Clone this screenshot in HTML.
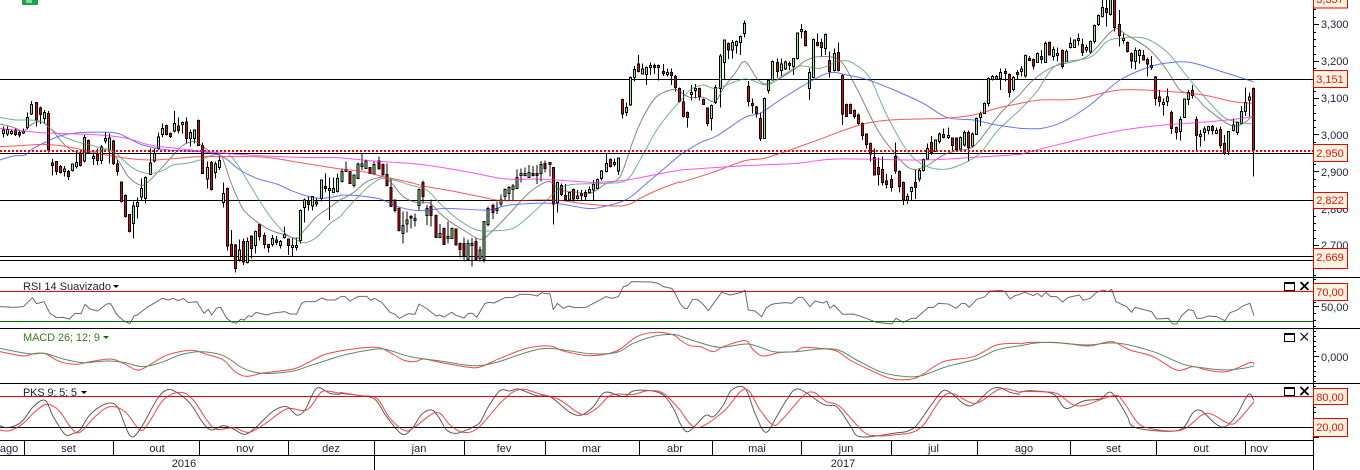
<!DOCTYPE html>
<html lang="pt"><head><meta charset="utf-8"><title>Chart</title>
<style>
html,body{margin:0;padding:0;background:#fff;width:1360px;height:470px;overflow:hidden}
svg{display:block}
text{font-family:"Liberation Sans",Arial,sans-serif;font-size:11px;fill:#1a2238}
.b{fill:#f7f4df;stroke:#f00000;stroke-width:1}
.r{fill:#f01010;text-anchor:middle;font-size:11px}
.m{text-anchor:middle}
.w{fill:none;stroke:#000;stroke-width:3}
.g{fill:#96ee96;stroke:#000;stroke-width:3}
.d{fill:#f00000;stroke:#000;stroke-width:3}
.ma polyline,.ma path{fill:none;stroke-width:3;stroke-linejoin:round;stroke-linecap:round}
.i polyline,.i path{fill:none;stroke-width:3;stroke-linejoin:round}
</style></head><body>
<svg width="1360" height="470" viewBox="0 0 1360 470" xmlns="http://www.w3.org/2000/svg">
<rect x="22" y="0" width="16" height="5" fill="#1fa04a"/>
<rect x="26" y="0" width="6" height="3" fill="#8ad49c"/>
<g shape-rendering="crispEdges" stroke="#000" stroke-width="1">
<path d="M0 79.5H1313M0 153.5H1313M0 200.5H1313M0 256.5H1313M0 260.5H1313M0 277.5H1360M0 328.5H1360M0 383.5H1360M0 440.5H1313M0 455.5H1313M0 427.5H1313M1313.5 0V470M24.5 440V455M113.5 440V455M199.5 440V455M288.5 440V455M374.5 440V470M464.5 440V455M545.5 440V455M639.5 440V455M712.5 440V455M801.5 440V455M891.5 440V455M977.5 440V455M1070.5 440V455M1156.5 440V455M1245.5 440V455"/>
<path stroke="#f00000" d="M0 291.5H1313M0 396.5H1313"/>
<path stroke="#007000" d="M0 321.5H1313"/>
<path d="M1313 24.5h6M1313 61.5h6M1313 98.5h6M1313 134.5h6M1313 171.5h6M1313 208.5h6M1313 245.5h6M1313 9.5h3M1313 17.5h3M1313 32.5h3M1313 39.5h3M1313 46.5h3M1313 54.5h3M1313 68.5h3M1313 76.5h3M1313 83.5h3M1313 91.5h3M1313 105.5h3M1313 113.5h3M1313 120.5h3M1313 127.5h3M1313 142.5h3M1313 149.5h3M1313 157.5h3M1313 164.5h3M1313 179.5h3M1313 186.5h3M1313 193.5h3M1313 201.5h3M1313 216.5h3M1313 223.5h3M1313 230.5h3M1313 238.5h3M1313 252.5h3M1313 260.5h3M1313 267.5h3M1313 275.5h3"/>
<path d="M1313 279.5h3M1313 284.5h3M1313 306.5h6M1313 302.5h3M1313 313.5h3M1313 320.5h3M1313 326.5h3M1313 331.5h3M1313 336.5h3M1313 341.5h3M1313 346.5h3M1313 351.5h3M1313 356.5h6M1313 361.5h3M1313 366.5h3M1313 371.5h3M1313 376.5h3M1313 381.5h3M1313 386.5h3M1313 407.5h3M1313 412.5h3M1313 437.5h6"/>
</g>
<!-- candles section 1 -->
<g transform="translate(.1667 0) scale(.33333)" shape-rendering="crispEdges">
<path class="w" d="M10 380V412M22 380V408M34 388V405M46 385V408M58 390V412M70 385V402M82 337V388M94 303V345M109 307V380M121 320V372M133 330V370M145 333V458M157 477V527M169 484V525M181 495V520M193 498V530M205 510V540M217 490V515M229 455V505M241 450V500M253 405V488M265 418V462M280 462V495M292 445V495M304 435V492M316 398V430M328 400V490M340 420V495M352 480V527M364 544V607M376 583V652M388 642V697M400 605V716M412 592V655M424 535V600M436 530V610M451 445V525M463 445V487M475 397V450M487 370V412M499 374V406M511 398V414M523 333V397M535 352V400M547 365V400M559 352V430M571 388V440M583 388V430M595 359V438M607 428V522M622 485V565M634 483V571M646 485V535M658 470V510M670 548V622M682 563V752M694 690V770M706 732V818M718 718V785M730 715V795M742 712V790M754 706V775M766 692V760M778 670V722M793 698V745M805 732V757M817 705V740M829 708V735M841 720V745M853 680V716M865 715V765M877 712V768M889 712V752M901 629V730M913 595V668M925 590V632M937 588V632M949 596V620M964 538V605M976 520V578M988 532V660M1000 532V578M1012 520V578"/>
<path class="g" d="M7 390h6V400h-6zM19 388h6V402h-6zM31 394h6V401h-6zM67 393h6V399h-6zM79 352h6V382h-6zM91 313h6V342h-6zM130 337h6V356h-6zM190 507h6V515h-6zM214 492h6V512h-6zM226 487h6V499h-6zM250 412h6V483h-6zM277 469h6V475h-6zM301 441h6V481h-6zM313 415h6V423h-6zM325 414h6V450h-6zM397 618h6V670h-6zM409 607h6V620h-6zM421 565h6V591h-6zM433 532h6V596h-6zM448 489h6V524h-6zM460 461h6V483h-6zM472 411h6V445h-6zM484 385h6V404h-6zM520 370h6V393h-6zM544 367h6V373h-6zM568 397h6V416h-6zM580 390h6V416h-6zM619 502h6V537h-6zM643 492h6V518h-6zM655 481h6V503h-6zM667 580h6V607h-6zM715 750h6V780h-6zM739 724h6V788h-6zM763 694h6V737h-6zM814 715h6V734h-6zM838 724h6V737h-6zM850 703h6V712h-6zM874 736h6V743h-6zM886 736h6V743h-6zM898 631h6V722h-6zM910 600h6V623h-6zM934 590h6V618h-6zM946 606h6V612h-6zM961 540h6V596h-6zM985 565h6V571h-6zM997 565h6V577h-6zM1009 535h6V575h-6z"/>
<path class="d" d="M43 390h6V403h-6zM55 397h6V405h-6zM106 307h6V360h-6zM118 324h6V344h-6zM142 340h6V450h-6zM154 489h6V497h-6zM166 484h6V514h-6zM178 499h6V517h-6zM202 514h6V529h-6zM238 460h6V497h-6zM262 421h6V459h-6zM289 462h6V482h-6zM337 423h6V491h-6zM349 492h6V515h-6zM361 546h6V604h-6zM373 586h6V650h-6zM385 644h6V695h-6zM496 376h6V404h-6zM508 400h6V410h-6zM532 378h6V392h-6zM556 366h6V416h-6zM592 361h6V436h-6zM604 436h6V520h-6zM631 487h6V569h-6zM679 565h6V738h-6zM691 733h6V768h-6zM703 735h6V805h-6zM727 724h6V786h-6zM751 708h6V745h-6zM775 674h6V710h-6zM790 706h6V734h-6zM802 734h6V743h-6zM826 720h6V728h-6zM862 717h6V737h-6zM922 602h6V613h-6zM973 559h6V566h-6z"/>
</g>
<!-- candles section 2 -->
<g transform="translate(340.1667 0) scale(.33333)" shape-rendering="crispEdges">
<path class="w" d="M5 505V547M17 485V516M29 513V552M41 523V562M53 488V537M65 462V510M77 478V507M89 501V522M101 485V524M116 470V509M128 491V527M140 490V559M152 535V621M164 598V638M176 623V694M188 635V730M200 635V698M212 645V685M224 640V680M236 566V632M248 542V610M260 615V675M272 598V680M287 644V714M299 672V712M311 683V735M323 665V730M335 683V717M347 685V737M359 728V772M371 712V785M383 718V780M395 714V800M407 712V782M419 740V785M431 663V788M443 620V680M458 610V657M470 605V642M482 583V620M494 565V600M506 558V603M518 552V600M530 508V567M542 505V548M554 502V529M566 495V534M578 498V529M590 495V552M602 483V545M614 482V517M629 486V530M640 501V673M652 545V638M664 550V588M676 552V602M688 576V602M700 565V605M712 570V598M724 570V600M736 570V600M748 560V580M760 540V600M772 535V567M784 510V542M799 462V517M811 475V502M823 475V500M835 472V525M847 296V356M859 308V348M871 230V318M883 198V245M895 165V217M907 190V224M919 200V255M931 187V225M943 190V222M955 194V242M970 192V228M982 205V230M994 205V255M1006 225V275M1018 263V307"/>
<path class="g" d="M2 514h6V545h-6zM14 508h6V514h-6zM38 525h6V557h-6zM50 492h6V535h-6zM62 492h6V500h-6zM74 483h6V505h-6zM98 493h6V522h-6zM185 676h6V700h-6zM197 660h6V672h-6zM221 656h6V661h-6zM233 568h6V617h-6zM257 625h6V647h-6zM296 700h6V712h-6zM320 709h6V716h-6zM332 685h6V715h-6zM380 730h6V778h-6zM392 730h6V736h-6zM416 750h6V775h-6zM428 665h6V778h-6zM440 626h6V674h-6zM467 625h6V632h-6zM479 600h6V612h-6zM491 568h6V589h-6zM503 562h6V580h-6zM515 558h6V568h-6zM527 532h6V565h-6zM539 520h6V527h-6zM551 520h6V527h-6zM563 517h6V532h-6zM599 493h6V520h-6zM649 547h6V607h-6zM685 578h6V600h-6zM709 588h6V596h-6zM745 568h6V578h-6zM757 553h6V570h-6zM769 538h6V565h-6zM781 513h6V536h-6zM796 490h6V515h-6zM820 487h6V494h-6zM832 474h6V513h-6zM856 322h6V338h-6zM868 232h6V315h-6zM880 208h6V233h-6zM904 207h6V222h-6zM916 202h6V224h-6zM928 196h6V203h-6zM979 217h6V224h-6z"/>
<path class="d" d="M26 515h6V550h-6zM86 503h6V520h-6zM113 483h6V507h-6zM125 493h6V525h-6zM137 524h6V557h-6zM149 562h6V619h-6zM161 600h6V632h-6zM173 625h6V692h-6zM209 650h6V654h-6zM245 547h6V590h-6zM269 619h6V647h-6zM284 646h6V712h-6zM308 685h6V733h-6zM344 687h6V735h-6zM356 730h6V748h-6zM368 730h6V768h-6zM404 724h6V780h-6zM455 617h6V637h-6zM575 520h6V527h-6zM587 520h6V527h-6zM611 490h6V505h-6zM626 488h6V493h-6zM637 503h6V612h-6zM661 556h6V583h-6zM673 586h6V600h-6zM697 568h6V597h-6zM721 580h6V586h-6zM733 578h6V590h-6zM808 478h6V500h-6zM844 298h6V342h-6zM892 192h6V215h-6zM940 196h6V203h-6zM952 196h6V203h-6zM967 214h6V220h-6zM991 217h6V227h-6zM1003 229h6V263h-6zM1015 265h6V305h-6z"/>
</g>
<!-- candles section 3 -->
<g transform="translate(680.1667 0) scale(.33333)" shape-rendering="crispEdges">
<path class="w" d="M10 270V352M22 335V383M34 255V302M46 252V295M58 262V302M70 296V315M82 322V378M94 314V392M106 255V312M121 162V323M133 118V240M145 128V177M157 120V175M169 122V160M181 107V165M193 62V113M205 243V320M217 295V340M229 318V352M241 338V423M253 293V417M265 238V280M277 182V242M292 175V232M304 175V228M316 182V210M328 185V210M340 174V225M352 97V178M364 72V115M376 90V140M388 205V300M400 116V235M412 100V139M424 115V170M436 101V165M448 155V232M463 145V214M475 127V214M487 224V375M499 311V351M511 311V342M523 328V355M535 340V373M547 368V420M559 400V445M571 428V485M583 445V527M595 472V557M607 470V557M619 522V565M634 525V575M646 428V522M658 512V578M670 545V615M682 580V612M694 560V600M706 510V597M718 505V545M730 475V515M742 430V479M754 408V465M766 418V456M778 398V430M790 385V415M805 382V417M817 412V450M829 412V450M841 410V449M853 392V440M865 392V485M877 398V442M889 352V405M901 335V378M913 308V342M925 233V320M937 225V242M949 225V239M961 205V270M976 205V245M988 221V293M1000 228V275M1012 210V238"/>
<path class="g" d="M31 277h6V284h-6zM43 265h6V272h-6zM91 316h6V355h-6zM103 263h6V307h-6zM118 168h6V265h-6zM130 120h6V187h-6zM154 127h6V150h-6zM166 124h6V136h-6zM178 109h6V128h-6zM190 70h6V100h-6zM250 295h6V415h-6zM262 242h6V272h-6zM274 184h6V240h-6zM301 192h6V212h-6zM313 186h6V207h-6zM337 176h6V200h-6zM349 99h6V176h-6zM361 88h6V95h-6zM385 217h6V266h-6zM397 118h6V233h-6zM433 103h6V145h-6zM460 160h6V212h-6zM679 590h6V600h-6zM691 562h6V574h-6zM715 511h6V537h-6zM727 478h6V512h-6zM739 445h6V477h-6zM763 420h6V454h-6zM775 402h6V425h-6zM802 406h6V412h-6zM838 412h6V447h-6zM850 398h6V435h-6zM874 402h6V438h-6zM886 355h6V403h-6zM898 342h6V352h-6zM910 310h6V340h-6zM922 235h6V311h-6zM934 229h6V238h-6zM946 229h6V237h-6zM958 217h6V236h-6zM997 232h6V268h-6z"/>
<path class="d" d="M7 306h6V350h-6zM19 337h6V353h-6zM55 265h6V290h-6zM67 298h6V313h-6zM79 324h6V371h-6zM142 130h6V150h-6zM202 259h6V305h-6zM214 310h6V317h-6zM226 321h6V341h-6zM238 355h6V415h-6zM289 187h6V214h-6zM325 190h6V197h-6zM373 95h6V137h-6zM409 127h6V137h-6zM421 127h6V143h-6zM445 181h6V214h-6zM472 157h6V212h-6zM484 226h6V342h-6zM496 313h6V349h-6zM508 313h6V340h-6zM520 331h6V350h-6zM532 345h6V371h-6zM544 370h6V407h-6zM556 402h6V434h-6zM568 430h6V462h-6zM580 472h6V525h-6zM592 502h6V524h-6zM604 508h6V547h-6zM616 543h6V554h-6zM631 538h6V563h-6zM643 469h6V513h-6zM655 514h6V560h-6zM667 547h6V600h-6zM703 547h6V563h-6zM751 427h6V458h-6zM787 403h6V412h-6zM814 414h6V437h-6zM826 414h6V448h-6zM862 397h6V442h-6zM973 214h6V220h-6zM985 223h6V277h-6zM1009 217h6V224h-6z"/>
</g>
<!-- candles section 4 -->
<g transform="translate(1020.1667 0) scale(.33333)" shape-rendering="crispEdges">
<path class="w" d="M4 198V230M16 163V232M28 168V183M40 176V208M52 158V189M64 150V190M76 125V189M88 125V167M100 140V182M112 143V185M127 148V205M139 148V186M151 112V145M163 118V144M175 100V137M187 115V168M199 133V158M211 122V160M223 74V130M235 44V78M247 0V52M259 0V80M271 0V46M283 0V95M298 30V140M310 100V130M322 125V157M334 158V205M346 142V208M358 147V190M370 150V182M382 172V230M394 168V210M406 228V317M418 270V320M430 295V347M442 265V318M454 332V402M469 380V418M481 350V422M493 295V354M505 270V315M517 255V295M529 350V452M541 390V440M553 380V423M565 378V403M577 375V403M589 382V402M601 380V445M613 405V465M625 393V465M640 355V394M652 365V405M664 318V372M676 262V348M688 278V350M700 263V530"/>
<path class="g" d="M1 207h6V214h-6zM13 166h6V228h-6zM49 160h6V187h-6zM73 130h6V187h-6zM97 148h6V170h-6zM109 160h6V167h-6zM136 154h6V184h-6zM148 130h6V143h-6zM160 120h6V142h-6zM172 115h6V121h-6zM196 142h6V150h-6zM208 124h6V156h-6zM220 76h6V124h-6zM232 46h6V74h-6zM244 22h6V50h-6zM268 -3h6V44h-6zM307 115h6V122h-6zM343 152h6V185h-6zM355 151h6V167h-6zM391 196h6V203h-6zM427 307h6V314h-6zM439 291h6V305h-6zM478 358h6V395h-6zM490 297h6V352h-6zM502 278h6V299h-6zM538 403h6V410h-6zM550 387h6V397h-6zM562 380h6V392h-6zM586 392h6V400h-6zM622 395h6V455h-6zM637 375h6V392h-6zM649 367h6V397h-6zM661 334h6V370h-6zM673 307h6V334h-6zM685 291h6V300h-6z"/>
<path class="d" d="M25 175h6V181h-6zM37 178h6V198h-6zM61 170h6V178h-6zM85 127h6V165h-6zM124 152h6V200h-6zM184 133h6V158h-6zM256 25h6V37h-6zM280 -3h6V82h-6zM295 73h6V106h-6zM319 127h6V155h-6zM331 160h6V183h-6zM367 166h6V180h-6zM379 178h6V192h-6zM403 231h6V295h-6zM415 291h6V305h-6zM451 337h6V385h-6zM466 382h6V397h-6zM514 272h6V286h-6zM526 358h6V406h-6zM574 379h6V392h-6zM598 388h6V437h-6zM610 430h6V460h-6zM697 265h6V450h-6z"/>
</g>
<path d="M0 151H1313" stroke="#f00000" stroke-width="2" stroke-dasharray="2 2" fill="none" shape-rendering="crispEdges"/>
<!-- moving averages -->
<g class="ma" opacity=".72">
<g transform="scale(.33333)">
<polyline stroke="#555" points="0,372 40,382 70,395 85,380 110,366 135,370 160,395 200,440 240,458 300,452 330,450 360,490 385,530 415,553 435,553 470,520 520,465 550,435 585,425 610,440 640,462 665,470 690,540 715,600 735,635 770,665 810,690 850,703 890,715 905,700 950,650 985,625 1020,600"/>
<polyline stroke="#3f9268" points="0,352 20,356 50,360 90,360 125,365 150,385 180,405 230,425 290,440 340,455 370,480 400,505 440,520 480,515 520,495 560,490 600,480 640,465 680,460 710,490 750,555 800,635 850,695 890,720 915,728 950,712 985,675 1020,650"/>
<polyline stroke="#2a3cf0" points="0,480 40,468 75,465 100,445 140,425 180,408 240,398 340,398 380,412 420,432 470,445 530,452 600,455 650,463 680,478 720,510 770,535 830,552 870,570 920,588 965,595 1020,587"/>
<polyline stroke="#f01818" points="0,440 60,437 130,433 190,438 250,450 320,465 400,477 460,480 530,475 600,470 700,470 800,472 900,488 1020,507"/>
<polyline stroke="#ff10e0" points="0,385 60,392 120,398 170,400 300,405 380,415 450,435 530,445 620,455 700,462 800,468 900,472 1020,473"/>
</g>
<g transform="translate(340 0) scale(.33333)">
<polyline stroke="#555" points="0,600 40,578 80,545 115,533 135,532 160,555 190,590 230,608 270,610 300,640 330,665 370,690 420,718 450,700 500,650 560,585 600,555 630,545 660,570 700,575 750,580 800,550 840,530 880,420 910,350 950,290 1000,268 1020,275"/>
<polyline stroke="#3f9268" points="0,650 40,605 80,565 120,537 160,540 210,555 260,570 300,610 350,655 410,690 470,692 520,685 560,655 620,600 660,565 700,553 800,550 860,540 900,480 950,390 1000,325 1020,305"/>
<polyline stroke="#2a3cf0" points="0,585 50,587 120,597 180,622 240,632 320,625 440,630 510,615 640,610 740,625 790,620 860,598 920,550 1020,465"/>
<polyline stroke="#f01818" points="0,507 70,515 130,530 200,545 260,560 330,572 420,590 490,602 640,600 740,612 830,618 870,612 900,595 960,567 1020,545"/>
<polyline stroke="#ff10e0" points="0,473 100,483 240,493 340,508 420,523 500,537 620,538 760,547 860,540 940,525 1020,510"/>
</g>
<g transform="translate(680 0) scale(.33333)">
<polyline stroke="#555" points="0,275 30,292 70,292 105,305 130,265 165,220 195,185 235,240 270,250 340,210 375,183 420,170 480,182 530,265 590,385 640,455 690,505 735,500 790,465 830,452 880,440 930,380 970,330 1020,283"/>
<polyline stroke="#3f9268" points="0,305 30,270 70,255 110,265 195,237 260,255 310,225 360,198 420,205 480,183 520,190 570,235 620,345 680,450 730,495 790,508 840,495 900,460 950,395 1020,330"/>
<polyline stroke="#2a3cf0" points="0,465 60,428 110,408 195,352 240,340 300,300 390,245 450,218 500,225 580,245 720,305 800,352 880,360 950,375 1020,385"/>
<polyline stroke="#f01818" points="0,548 90,520 195,482 260,473 400,425 530,378 630,360 790,355 880,345 950,325 1020,310"/>
<polyline stroke="#ff10e0" points="0,510 195,497 350,490 470,477 730,480 880,472 1020,463"/>
</g>
<g transform="translate(1020 0) scale(.33333)">
<polyline stroke="#555" points="0,283 40,240 100,200 200,170 280,90 320,105 390,150 440,210 480,270 520,285 560,325 630,375 670,370 700,345"/>
<polyline stroke="#3f9268" points="0,330 50,275 110,195 210,172 260,125 300,115 375,115 440,155 490,215 540,275 610,350 660,367 700,372"/>
<polyline stroke="#2a3cf0" points="0,385 65,385 130,365 210,315 300,240 390,200 450,188 510,187 590,210 700,245"/>
<polyline stroke="#f01818" points="0,310 60,300 170,297 300,270 450,275 550,285 640,305 700,310"/>
<polyline stroke="#ff10e0" points="0,463 130,430 270,397 400,378 530,368 640,358 700,350"/>
</g>
</g>
<!-- indicators -->
<g class="i" opacity=".8">
<g transform="translate(0 275) scale(.33333)">
<polyline stroke="#444" points="0,95 40,97 70,95 97,68 110,86 132,80 150,115 170,128 190,127 208,132 225,115 243,116 255,88 270,102 293,108 320,87 332,86 350,118 370,137 390,146 402,123 412,120 440,98 487,70 505,75 520,70 535,77 550,70 565,83 590,80 612,115 625,103 635,120 650,99 662,97 680,130 695,141 708,145 722,133 733,135 745,122 755,125 768,112 800,120 820,114 855,110 870,117 890,117 905,85 915,80 945,80 965,69 980,75 1005,75 1020,67"/>
<polyline stroke="#f01818" points="0,230 70,243 100,236 135,236 180,260 230,268 260,262 330,252 370,265 410,285 440,275 490,245 530,232 580,226 620,238 670,255 705,290 740,304 790,294 880,282 920,265 970,240 1020,228"/>
<polyline stroke="#2f7040" points="0,220 60,232 100,237 135,235 190,252 250,263 320,258 370,262 430,275 490,260 540,240 600,230 670,242 730,280 790,295 880,288 930,272 1020,243"/>
<polyline stroke="#333" points="0,452 20,458 50,450 70,435 100,395 135,376 160,425 195,478 220,475 240,465 265,425 295,398 330,384 355,400 390,482 420,463 470,375 500,345 530,352 570,385 610,445 635,465 670,452 700,462 735,478 770,455 820,408 860,395 890,420 915,405 950,340 990,355 1020,358"/>
<polyline stroke="#f01818" points="0,465 30,467 70,445 105,410 140,388 175,405 215,460 240,472 285,425 330,395 375,410 420,465 445,445 490,375 540,352 580,375 640,458 700,458 745,472 790,450 860,402 920,405 960,355 980,348 1020,355"/>
</g>
<g transform="translate(340 275) scale(.33333)">
<polyline stroke="#444" points="0,65 15,65 30,78 55,64 80,64 92,76 103,70 125,82 150,112 165,118 178,130 205,116 225,118 237,87 262,102 288,123 298,120 312,126 335,112 348,121 372,129 385,115 398,115 410,127 435,85 448,82 462,84 495,68 520,67 540,58 570,58 592,63 605,53 615,56 630,56 640,104 652,85 670,100 685,93 705,98 738,97 770,80 798,65 815,70 835,65 850,35 862,32 875,20 935,21 955,25 970,35 995,40 1005,55 1020,85"/>
<polyline stroke="#f01818" points="0,228 30,223 90,217 130,222 190,255 225,260 250,252 300,262 380,276 420,276 480,250 560,220 630,213 670,228 750,242 830,228 890,185 945,172 1000,180 1020,195"/>
<polyline stroke="#2f7040" points="0,243 60,230 130,222 210,245 300,258 400,272 470,262 560,232 630,220 750,236 830,232 880,205 945,183 1000,178 1020,183"/>
<polyline stroke="#333" points="0,355 60,362 105,373 140,425 185,477 215,462 245,418 275,405 295,425 320,465 350,475 395,458 420,442 445,395 480,347 510,348 535,342 590,362 630,365 690,412 725,420 760,395 795,352 850,365 880,348 930,347 970,360 1000,400 1020,445"/>
<polyline stroke="#f01818" points="0,352 60,362 110,370 150,430 195,467 225,455 290,412 330,450 370,472 415,458 490,375 540,343 600,357 660,375 725,418 770,400 815,360 880,358 925,347 970,355 1020,405"/>
</g>
<g transform="translate(680 275) scale(.33333)">
<polyline stroke="#444" points="0,85 12,100 22,100 38,73 50,73 65,83 85,107 125,52 150,60 185,52 195,45 205,105 225,108 245,125 258,100 275,88 290,85 320,83 335,85 355,67 368,67 390,95 405,78 430,84 440,78 450,100 462,90 488,118 520,117 545,125 590,142 635,147 648,130 670,142 695,130 708,130 745,97 760,98 775,85 805,87 828,100 845,85 855,85 868,97 890,73 915,65 930,48 965,46 975,50 990,72 1005,62 1020,58"/>
<polyline stroke="#f01818" points="0,195 30,212 60,215 100,230 130,215 195,197 220,225 250,243 300,232 345,230 370,217 420,220 470,228 510,255 570,285 630,310 680,314 720,303 790,260 880,245 950,210 1020,205"/>
<polyline stroke="#2f7040" points="0,183 50,200 120,217 205,207 280,230 350,230 420,222 475,225 530,255 600,290 660,303 720,303 800,275 890,252 950,225 1020,212"/>
<polyline stroke="#333" points="0,445 25,470 75,422 100,425 130,390 155,345 195,340 225,415 257,472 290,425 320,375 355,342 430,388 470,395 510,450 540,485 640,475 700,460 750,395 785,350 810,352 870,393 930,345 960,338 990,352 1020,358"/>
<polyline stroke="#f01818" points="0,405 50,458 130,410 195,342 240,405 280,450 310,430 385,352 440,380 480,395 550,470 590,482 640,480 720,460 800,357 885,385 960,342 1020,352"/>
</g>
<g transform="translate(1020 275) scale(.33333)">
<polyline stroke="#444" points="0,57 15,52 40,62 52,55 65,65 78,52 92,65 110,65 128,81 145,67 178,60 190,76 210,70 230,52 250,45 265,50 275,43 288,80 320,95 335,112 345,97 395,110 410,132 445,130 458,147 470,147 485,122 505,104 520,107 530,130 545,130 565,123 590,125 615,137 630,113 650,106 670,92 690,85 702,122"/>
<polyline stroke="#f01818" points="0,207 30,202 100,203 150,207 210,213 275,200 330,225 400,245 470,285 520,275 560,285 620,290 690,263 702,268"/>
<polyline stroke="#2f7040" points="0,213 40,205 100,202 200,210 290,204 400,230 490,268 560,280 620,285 670,280 702,273"/>
<polyline stroke="#333" points="0,352 30,347 100,357 137,400 190,378 240,372 275,353 320,420 340,455 420,468 485,462 520,412 545,408 585,445 615,455 650,420 685,358 702,377"/>
<polyline stroke="#f01818" points="0,350 50,350 110,355 175,393 280,362 310,380 355,445 400,462 460,468 500,458 560,415 630,447 660,430 702,380"/>
</g>
</g>
<!-- axis labels -->
<text x="1321" y="28">3,300</text><text x="1321" y="65">3,200</text><text x="1321" y="102">3,100</text><text x="1321" y="139">3,000</text><text x="1321" y="176">2,900</text><text x="1321" y="213">2,800</text><text x="1321" y="249">2,700</text><text x="1321" y="311">50,00</text><text x="1321" y="361">0,000</text>
<rect class="b" x="1313.5" y="-5" width="34" height="13"/><text class="r" x="1330" y="3">3,357</text>
<rect class="b" x="1313.5" y="70.5" width="34" height="17"/><text class="r" x="1330" y="83">3,151</text>
<rect class="b" x="1313.5" y="144.5" width="34" height="17"/><text class="r" x="1330" y="157">2,950</text>
<rect class="b" x="1313.5" y="192.5" width="34" height="16"/><text class="r" x="1330" y="204">2,822</text>
<rect class="b" x="1313.5" y="248.5" width="34" height="20"/><text class="r" x="1330" y="261">2,669</text>
<rect class="b" x="1313.5" y="283.5" width="34" height="17"/><text class="r" x="1330" y="296">70,00</text>
<rect class="b" x="1313.5" y="388.5" width="34" height="16"/><text class="r" x="1330" y="401">80,00</text>
<rect class="b" x="1313.5" y="418.5" width="34" height="18"/><text class="r" x="1330" y="431">20,00</text>
<!-- panel titles -->
<text x="23" y="290" textLength="88" lengthAdjust="spacing">RSI 14 Suavizado</text><path d="M113 285h6l-3 3z" fill="#000"/>
<text x="23" y="341" style="fill:#3c7a20" textLength="77" lengthAdjust="spacing">MACD 26; 12; 9</text><path d="M103 336h6l-3 3z" fill="#007000"/>
<text x="23" y="396" textLength="54" lengthAdjust="spacing">PKS 9; 5; 5</text><path d="M81 391h6l-3 3z" fill="#000"/>
<!-- window buttons -->
<g fill="none" stroke="#000" shape-rendering="crispEdges">
<path d="M1284.5 282.5h10v8h-10zM1284.5 333.5h10v8h-10zM1284.5 387.5h10v8h-10z"/>
<path d="M1284 283.5h11M1284 334.5h11M1284 388.5h11"/>
</g>
<g fill="none" stroke="#000">
<path d="M1300.5 282l8 8M1308.5 282l-8 8M1300.5 387l8 8M1308.5 387l-8 8" stroke-width="1.8"/>
<path d="M1300.5 333l7.5 7.5M1308 333l-7.5 7.5" stroke-width="1.2"/>
</g>
<!-- months -->
<text class="m" x="9" y="452">ago</text><text class="m" x="68.5" y="452">set</text><text class="m" x="157" y="452">out</text><text class="m" x="245" y="452">nov</text><text class="m" x="331" y="452">dez</text><text class="m" x="419" y="452">jan</text><text class="m" x="504" y="452">fev</text><text class="m" x="591.5" y="452">mar</text><text class="m" x="675" y="452">abr</text><text class="m" x="757" y="452">mai</text><text class="m" x="846" y="452">jun</text><text class="m" x="933.5" y="452">jul</text><text class="m" x="1024" y="452">ago</text><text class="m" x="1113.5" y="452">set</text><text class="m" x="1201" y="452">out</text><text class="m" x="1259" y="452">nov</text>
<text class="m" x="184" y="467">2016</text><text class="m" x="843" y="467">2017</text>
</svg>
<script>
document.querySelectorAll('.ma polyline,.i polyline:not([stroke="#444"])').forEach(function(l){
var p=l.getAttribute('points').trim().split(/\s+/).map(function(s){return s.split(',').map(Number)});
var d='M'+p[0][0]+' '+p[0][1];
for(var i=0;i<p.length-1;i++){
var a=p[Math.max(i-1,0)],b=p[i],c=p[i+1],e=p[Math.min(i+2,p.length-1)];
d+='C'+(b[0]+(c[0]-a[0])/6).toFixed(1)+' '+(b[1]+(c[1]-a[1])/6).toFixed(1)+' '+(c[0]-(e[0]-b[0])/6).toFixed(1)+' '+(c[1]-(e[1]-b[1])/6).toFixed(1)+' '+c[0]+' '+c[1];
}
var n=document.createElementNS('http://www.w3.org/2000/svg','path');
n.setAttribute('d',d);n.setAttribute('stroke',l.getAttribute('stroke'));
l.parentNode.replaceChild(n,l);
});
</script>
</body></html>
